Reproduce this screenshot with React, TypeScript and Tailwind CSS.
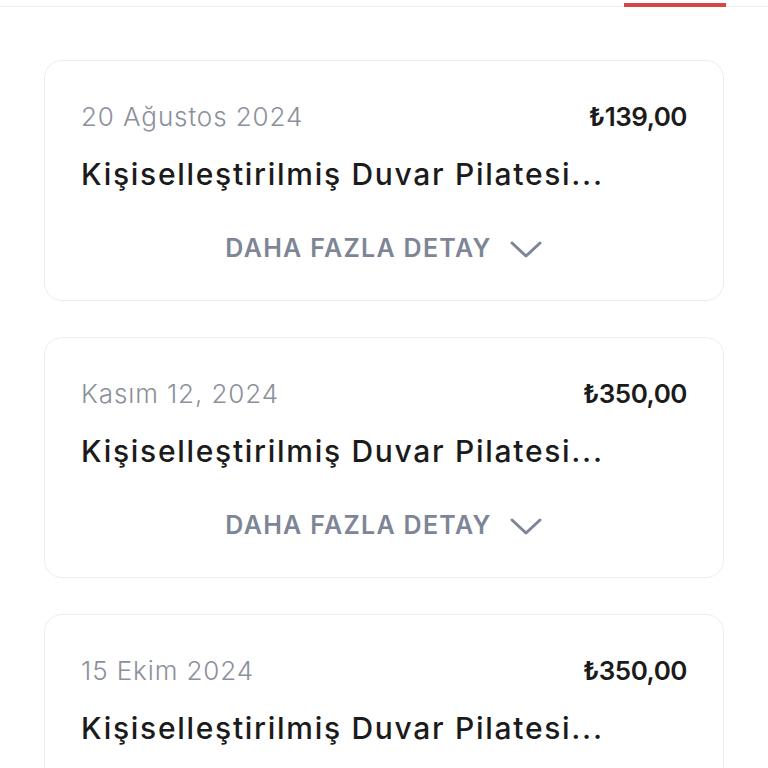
const orders = [
  { date: '20 Ağustos 2024', price: '₺139,00' },
  { date: 'Kasım 12, 2024', price: '₺350,00' },
  { date: '15 Ekim 2024', price: '₺350,00' },
]

function Chevron() {
  return (
    <svg width="34" height="20" viewBox="0 0 34 20" fill="none" className="ml-[17px]">
      <path d="M3 4 L17 17 L31 4" stroke="#7d8596" strokeWidth="3" strokeLinecap="round" strokeLinejoin="round" />
    </svg>
  )
}

function OrderCard({ date, price }: { date: string; price: string }) {
  return (
    <div className="shrink-0 h-[241px] rounded-[18px] border border-[#ececef] bg-white px-[36px] pt-[38px]">
      <div className="flex items-center justify-between h-[34px]">
        <span className="text-[26px] font-light text-[#8b909b] tracking-[0.9px]">{date}</span>
        <span className="text-[26px] font-semibold text-[#1b1b1b] tracking-[-0.5px]">{price}</span>
      </div>
      <div className="mt-[22px] h-[38px] flex items-center text-[30px] font-medium text-[#1b1b1b] tracking-[1.7px] whitespace-nowrap">
        Kişiselleştirilmiş Duvar Pilatesi...
      </div>
      <div className="mt-[41px] flex items-center justify-center h-[30px]">
        <span className="text-[25px] font-semibold text-[#7d8596] tracking-[1.3px]">DAHA FAZLA DETAY</span>
        <Chevron />
      </div>
    </div>
  )
}

export default function App() {
  return (
    <div className="w-[768px] h-[768px] overflow-hidden bg-white" style={{ fontFamily: 'Inter, "Noto Sans", sans-serif' }}>
      <div className="flex h-[7px] border-b border-[#ededf0]">
        <div className="ml-auto mr-[42px] mt-[3px] w-[102px] h-[4px] bg-[#d2464c]" />
      </div>
      <div className="flex flex-col gap-[36px] mx-[44px] mt-[53px]">
        {orders.map((o, i) => (
          <OrderCard key={i} date={o.date} price={o.price} />
        ))}
      </div>
    </div>
  )
}
